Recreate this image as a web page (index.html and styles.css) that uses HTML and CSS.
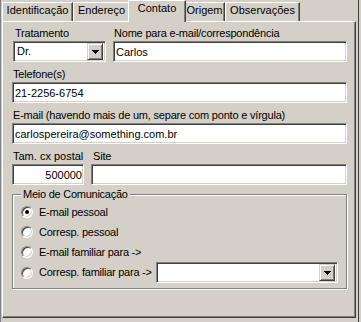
FILE: index.html
```html
<!DOCTYPE html>
<html lang="pt">
<head>
  <meta charset="utf-8">
  <title>Contato</title>
  <link rel="stylesheet" href="styles.css">
</head>
<body>
<div class="window">
  <div class="tabs">
    <div class="tab tab-ident">Identificação</div>
    <div class="tab tab-end">Endereço</div>
    <div class="tab tab-contato selected">Contato</div>
    <div class="tab tab-origem">Origem</div>
    <div class="tab tab-obs">Observações</div>
  </div>

  <div class="panel">
    <div class="row">
      <div class="field field-trat">
        <label>Tratamento</label>
        <div class="combo combo-trat">
          <span class="combo-text">Dr.</span>
          <span class="drop-btn"><svg width="7" height="4" viewBox="0 0 7 4"><path d="M0 0h7v1H0zM1 1h5v1H1zM2 2h3v1H2zM3 3h1v1H3z" fill="#000"/></svg></span>
        </div>
      </div>
      <div class="field grow">
        <label>Nome para e-mail/correspondência</label>
        <input class="edit" type="text" value="Carlos">
      </div>
    </div>

    <div class="row">
      <div class="field grow">
        <label>Telefone(s)</label>
        <input class="edit" type="text" value="21-2256-6754">
      </div>
    </div>

    <div class="row">
      <div class="field grow">
        <label>E-mail (havendo mais de um, separe com ponto e vírgula)</label>
        <input class="edit" type="text" value="carlospereira@something.com.br">
      </div>
    </div>

    <div class="row">
      <div class="field field-cx">
        <label>Tam. cx postal</label>
        <input class="edit num" type="text" value="500000">
      </div>
      <div class="field grow field-site">
        <label>Site</label>
        <input class="edit" type="text" value="">
      </div>
    </div>

    <fieldset class="group">
      <legend>Meio de Comunicação</legend>
      <div class="opt"><span class="radio checked"></span>E-mail pessoal</div>
      <div class="opt"><span class="radio"></span>Corresp. pessoal</div>
      <div class="opt"><span class="radio"></span>E-mail familiar para -&gt;</div>
      <div class="opt opt-last">
        <span class="radio"></span>Corresp. familiar para -&gt;
        <div class="combo combo-fam">
          <span class="combo-text"></span>
          <span class="drop-btn"><svg width="7" height="4" viewBox="0 0 7 4"><path d="M0 0h7v1H0zM1 1h5v1H1zM2 2h3v1H2zM3 3h1v1H3z" fill="#000"/></svg></span>
        </div>
      </div>
    </fieldset>
  </div>
</div>
</body>
</html>
```

FILE: styles.css
```css
* {
     box-sizing: border-box;
}

body {
     margin: 0;
     background-color: #d4d0c8;
     font-family: "Liberation Sans", Arial, sans-serif;
     font-size: 11px;
     line-height: 13px;
     color: #000;
}

.window {
     width: 359px;
     height: 322px;
     border-left: 1px solid #808080;
     border-right: 1px solid #404040;
}

/* tab strip */
.tabs {
     display: flex;
     align-items: flex-end;
     height: 21px;
     padding-left: 1px;
}

.tab {
     height: 19px;
     padding-top: 1px;
     text-align: center;
     border-top: 1px solid #fff;
     border-left: 1px solid #fff;
     border-right: 1px solid #404040;
     box-shadow: inset -1px 0 0 #808080;
     white-space: nowrap;
}

.tab-ident { width: 71px; }
.tab-end { width: 57px; }
.tab-contato { width: 54px; }
.tab-origem { width: 41px; }
.tab-obs { width: 75px; }

.tab.selected {
     position: relative;
     z-index: 1;
     height: 22px;
     margin: 0 -2px -1px -2px;
     width: 58px;
     background-color: #d4d0c8;
}

/* page of the tab control */
.panel {
     margin-left: 1px;
     width: 354px;
     height: 297px;
     padding: 5px 8px 0 9px;
     border: 1px solid;
     border-color: #fff #404040 #404040 #fff;
     box-shadow: inset -1px -1px 0 #808080;
}

.row {
     display: flex;
     gap: 7px;
     margin-bottom: 6px;
}

.field {
     display: flex;
     flex-direction: column;
}

.field label {
     display: block;
     height: 13px;
     margin-bottom: 1px;
     padding-left: 1px;
     white-space: nowrap;
     letter-spacing: -0.2px;
}

.grow {
     flex: 1;
}

.field-trat {
     padding-left: 1px;
     width: 94px;
}

.field-trat label,
.field-site label {
     padding-left: 2px;
}

.field-cx {
     width: 72px;
}

.field-cx label {
     letter-spacing: 0;
}

.edit {
     display: block;
     width: 100%;
     height: 21px;
     margin: 0;
     padding: 0 2px;
     font: inherit;
     color: #000;
     background-color: #fff;
     border: 1px solid;
     border-color: #808080 #fff #fff #808080;
     box-shadow: inset 1px 1px 0 #404040, inset -1px -1px 0 #d4d0c8;
     outline: none;
}

.edit.num {
     text-align: right;
     padding-right: 1px;
}

/* drop down lists */
.combo {
     display: flex;
     align-items: center;
     height: 21px;
     padding: 2px;
     background-color: #fff;
     border: 1px solid;
     border-color: #808080 #fff #fff #808080;
     box-shadow: inset 1px 1px 0 #404040, inset -1px -1px 0 #d4d0c8;
}

.combo-text {
     flex: 1;
     padding-left: 1px;
}

.drop-btn {
     display: flex;
     align-items: center;
     justify-content: center;
     width: 16px;
     height: 17px;
     background-color: #d4d0c8;
     border: 1px solid;
     border-color: #d4d0c8 #404040 #404040 #d4d0c8;
     box-shadow: inset 1px 1px 0 #fff, inset -1px -1px 0 #808080;
}

.drop-btn svg {
     display: block;
}

/* group box */
.group {
     margin: -3px 0 0 0;
     padding: 1px 8px 5px 8px;
     width: 335px;
     border: 1px solid #808080;
     box-shadow: 1px 1px 0 #fff, inset 1px 1px 0 #fff;
}

.group legend {
     padding: 0 2px;
     background-color: #d4d0c8;
     line-height: 13px;
     letter-spacing: -0.25px;
}

.opt {
     display: flex;
     align-items: center;
     height: 20px;
     white-space: nowrap;
     letter-spacing: -0.25px;
}

.opt-last {
     height: 21px;
}

.radio {
     position: relative;
     flex-shrink: 0;
     width: 12px;
     height: 12px;
     margin-right: 6px;
     border-radius: 50%;
     background-color: #fff;
     border: 1px solid;
     border-color: #808080 #fff #fff #808080;
     box-shadow: inset 1px 1px 0 #404040, inset -1px -1px 0 #d4d0c8;
}

.radio.checked::after {
     content: "";
     position: absolute;
     left: 3px;
     top: 3px;
     width: 4px;
     height: 4px;
     border-radius: 50%;
     background-color: #000;
}

.combo-fam {
     flex-shrink: 0;
     width: 182px;
     margin-left: auto;
}
```
